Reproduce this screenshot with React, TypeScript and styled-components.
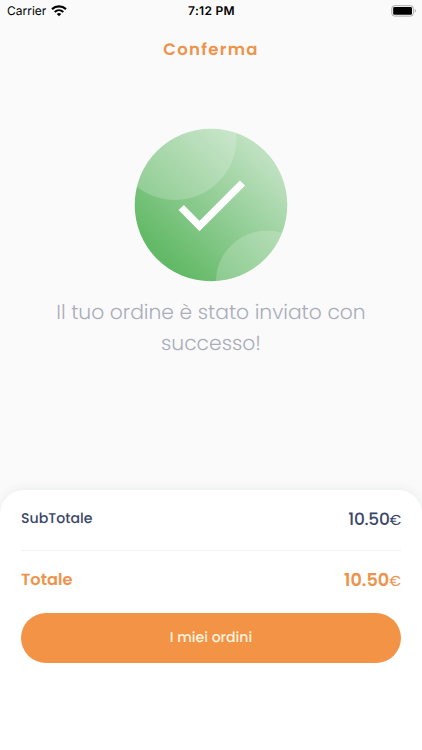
import React from 'react';
import styled, { createGlobalStyle } from 'styled-components';

const GlobalStyle = createGlobalStyle`
  * { box-sizing: border-box; }
  body {
    margin: 0;
    background: #fafafa;
    font-family: Poppins, Inter, "Open Sans", sans-serif;
    text-rendering: geometricPrecision;
  }
`;

const Screen = styled.div`
  display: flex;
  flex-direction: column;
  width: 100%;
  height: 750px;
  overflow: hidden;
  background: #fafafa;
`;

const StatusBar = styled.header`
  display: grid;
  grid-template-columns: 1fr auto 1fr;
  align-items: center;
  height: 21px;
  padding: 0 5px 0 7px;
  color: #000;
  font-family: Inter, sans-serif;
  font-size: 12px;
`;

const Carrier = styled.div`
  display: flex;
  align-items: center;
  gap: 4.5px;
`;

const Clock = styled.div`
  padding-right: 1px;
  font-weight: 600;
  letter-spacing: 0.3px;
`;

const BatterySlot = styled.div`
  display: flex;
  justify-content: flex-end;
`;

const Title = styled.h1`
  margin: 17px 0 0;
  height: 24px;
  line-height: 24px;
  text-align: center;
  color: #ee934c;
  font-size: 16.5px;
  font-weight: 600;
  letter-spacing: 1.3px;
`;

const Result = styled.main`
  display: flex;
  flex: 1;
  flex-direction: column;
  align-items: center;
  padding-top: 66px;
`;

const Message = styled.p`
  width: 330px;
  margin: 16px 0 0;
  text-align: center;
  color: #a9adba;
  font-size: 20.3px;
  font-weight: 300;
  line-height: 31px;
`;

const Summary = styled.section`
  height: 260px;
  padding: 0 21px;
  border-radius: 24px 24px 0 0;
  background: #fff;
  box-shadow: 0 -2px 10px rgba(40, 50, 80, 0.06);
`;

const Row = styled.div<{ $total?: boolean }>`
  display: flex;
  align-items: center;
  justify-content: space-between;
  height: ${(p) => (p.$total ? 58 : 61)}px;
  padding-bottom: ${(p) => (p.$total ? 0 : 3)}px;
  border-bottom: ${(p) => (p.$total ? 'none' : '1px solid #f4f4f5')};
  color: ${(p) => (p.$total ? '#ee934c' : '#3a4768')};
`;

const Label = styled.span<{ $total?: boolean }>`
  font-size: ${(p) => (p.$total ? 16.2 : 14.1)}px;
  font-weight: ${(p) => (p.$total ? 600 : 500)};
  line-height: ${(p) => (p.$total ? 22 : 21)}px;
`;

const Amount = styled.span<{ $total?: boolean }>`
  font-size: ${(p) => (p.$total ? 17.7 : 17)}px;
  font-weight: ${(p) => (p.$total ? 600 : 500)};
  letter-spacing: ${(p) => (p.$total ? 0 : -0.3)}px;
`;

const Currency = styled.span`
  font-size: 14.5px;
  font-weight: 400;
`;

const OrdersButton = styled.button`
  display: block;
  width: 100%;
  height: 50px;
  margin: 4px 0 0;
  padding: 0 0 1px;
  border: 0;
  border-radius: 25px;
  background: #f39346;
  color: #fff4df;
  font: inherit;
  font-size: 14.1px;
  font-weight: 500;
  text-rendering: inherit;
`;

const WifiIcon = () => (
  <svg width="16" height="12" viewBox="0 0 16 12" fill="none" stroke="#000">
    <path d="M1 4.100C5 .500 11 .500 15 4.100" strokeWidth="2.200" />
    <path d="M3.700 7C6.200 4.700 9.800 4.700 12.300 7" strokeWidth="2" />
    <path d="M5.800 8.900C7.100 7.800 8.900 7.800 10.200 8.900L8 11.300Z" fill="#000" stroke="none" />
  </svg>
);

const BatteryIcon = () => (
  <svg width="26" height="12" viewBox="0 0 26 12">
    <rect x=".8" y=".7" width="21.600" height="10.400" rx="2.800" fill="#fafafa" stroke="#aaa" />
    <rect x="2.200" y="2.100" width="18.800" height="7.600" rx="1.300" fill="#000" />
    <path d="M23.800 4.100C25.100 4.600 25.100 7.200 23.800 7.700Z" fill="#999" />
  </svg>
);

const SuccessIcon = () => (
  <svg width="154" height="154" viewBox="0 0 154 154">
    <defs>
      <linearGradient id="green" x1="30" y1="130" x2="129" y2="26" gradientUnits="userSpaceOnUse">
        <stop offset="0" stopColor="#62b966" />
        <stop offset="1" stopColor="#bfe1c1" />
      </linearGradient>
      <clipPath id="disc">
        <circle cx="77" cy="77" r="76.3" />
      </clipPath>
    </defs>
    <g clipPath="url(#disc)">
      <rect width="154" height="154" fill="url(#green)" />
      <circle cx="41" cy="10.500" r="61.500" fill="#fff" fillOpacity=".2" />
      <circle cx="133" cy="153.500" r="51" fill="#fff" fillOpacity=".2" />
    </g>
    <path d="M47.200 79.500L65.500 98L108.500 55" fill="none" stroke="#fff" strokeWidth="7.400" />
  </svg>
);

export default function App() {
  return (
    <>
      <GlobalStyle />
      <Screen>
        <StatusBar>
          <Carrier>
            Carrier
            <WifiIcon />
          </Carrier>
          <Clock>7:12 PM</Clock>
          <BatterySlot>
            <BatteryIcon />
          </BatterySlot>
        </StatusBar>
        <Title>Conferma</Title>
        <Result>
          <SuccessIcon />
          <Message>
            Il tuo ordine è stato inviato con
            <br />
            successo!
          </Message>
        </Result>
        <Summary>
          <Row>
            <Label>SubTotale</Label>
            <Amount>
              10.50<Currency>€</Currency>
            </Amount>
          </Row>
          <Row $total>
            <Label $total>Totale</Label>
            <Amount $total>
              10.50<Currency>€</Currency>
            </Amount>
          </Row>
          <OrdersButton>I miei ordini</OrdersButton>
        </Summary>
      </Screen>
    </>
  );
}
